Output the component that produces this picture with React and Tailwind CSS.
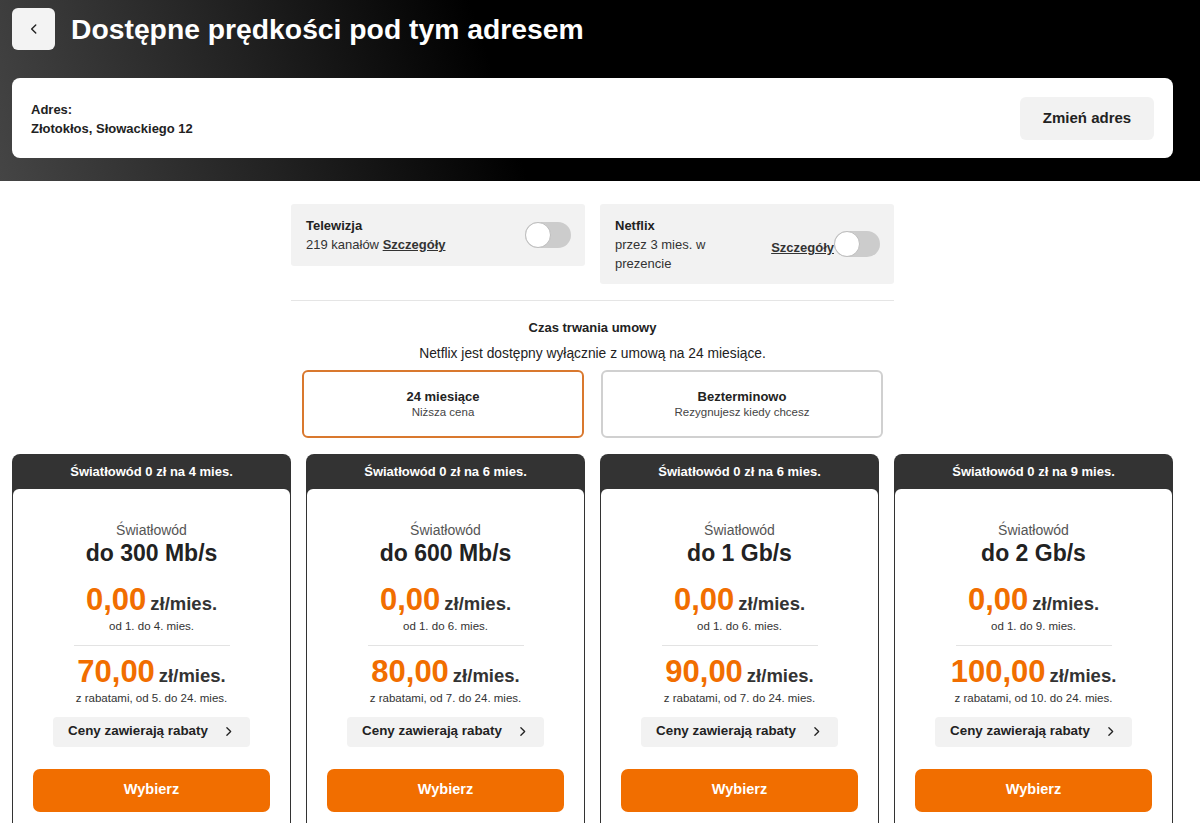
import React from "react";

const plans = [
  { promo: "Światłowód 0 zł na 4 mies.", speed: "do 300 Mb/s", first: "od 1. do 4. mies.", price: "70,00", rest: "z rabatami, od 5. do 24. mies." },
  { promo: "Światłowód 0 zł na 6 mies.", speed: "do 600 Mb/s", first: "od 1. do 6. mies.", price: "80,00", rest: "z rabatami, od 7. do 24. mies." },
  { promo: "Światłowód 0 zł na 6 mies.", speed: "do 1 Gb/s", first: "od 1. do 6. mies.", price: "90,00", rest: "z rabatami, od 7. do 24. mies." },
  { promo: "Światłowód 0 zł na 9 mies.", speed: "do 2 Gb/s", first: "od 1. do 9. mies.", price: "100,00", rest: "z rabatami, od 10. do 24. mies." },
];

const Toggle = () => (
  <div className="w-[46px] h-[26px] rounded-full bg-[#cccccc] flex items-center shrink-0">
    <div className="w-[26px] h-[26px] rounded-full bg-white border border-[#bdbdbd]" />
  </div>
);

const Chevron = ({ className = "" }) => (
  <svg viewBox="0 0 24 24" className={className} fill="none" stroke="currentColor" strokeWidth="2.4" strokeLinecap="round" strokeLinejoin="round">
    <path d="M9 5l7 7-7 7" />
  </svg>
);

const PlanCard = ({ plan }) => (
  <div className="bg-[#333333] rounded-t-lg px-px h-[369px] flex flex-col">
    <div className="h-[35px] flex items-center justify-center text-white text-[13px] font-bold">
      {plan.promo}
    </div>
    <div className="bg-white rounded-t-md flex-1 flex flex-col items-center pt-[32px]">
      <div className="text-[14px] text-[#555555] leading-[18px]">Światłowód</div>
      <div className="text-[23px] font-bold text-[#222222] leading-[28px]">{plan.speed}</div>
      <div className="mt-[16px] flex items-baseline gap-[4px]">
        <span className="text-[31px] font-bold text-[#f16e00] leading-[34px]">0,00</span>
        <span className="text-[18.5px] font-bold text-[#333333]">zł/mies.</span>
      </div>
      <div className="text-[11.5px] text-[#333333] leading-[14px] mt-[1px]">{plan.first}</div>
      <div className="mt-[12px] w-[156px] h-px bg-[#e3e3e3]" />
      <div className="mt-[9px] flex items-baseline gap-[4px]">
        <span className="text-[31px] font-bold text-[#f16e00] leading-[34px]">{plan.price}</span>
        <span className="text-[18.5px] font-bold text-[#333333]">zł/mies.</span>
      </div>
      <div className="text-[11.5px] text-[#333333] leading-[14px] mt-[1px]">{plan.rest}</div>
      <div className="mt-[12px] h-[30px] w-[197px] bg-[#f2f2f2] rounded-[4px] flex items-center justify-center gap-[14px] text-[13.4px] font-bold text-[#222222]">
        <span>Ceny zawierają rabaty</span>
        <Chevron className="w-[13px] h-[13px]" />
      </div>
      <div className="mt-[22px] h-[43px] w-[237px] bg-[#f16e00] rounded-[7px] flex items-center justify-center text-white text-[14.5px] font-bold">
        Wybierz
      </div>
    </div>
  </div>
);

export default function App() {
  return (
    <div className="w-[1200px] h-[824px] overflow-hidden bg-white font-['Liberation_Sans',Arial,sans-serif] text-[#222222]">
      {/* Header */}
      <header className="h-[181px] bg-[linear-gradient(72deg,#454545_0%,#222222_22%,#000000_42%,#000000_100%)] px-[12px] pt-[8px]">
        <div className="flex items-center gap-[16px] h-[42px]">
          <button className="w-[43px] h-[42px] rounded-[6px] bg-[#f3f3f3] flex items-center justify-center text-[#222222]">
            <Chevron className="w-[14px] h-[14px] rotate-180" />
          </button>
          <h1 className="text-[28.3px] font-bold text-white">Dostępne prędkości pod tym adresem</h1>
        </div>
        <div className="mt-[28px] w-[1161px] h-[80px] bg-white rounded-[8px] flex items-center justify-between pl-[19px] pr-[19px]">
          <div className="text-[13px] font-bold text-[#222222] leading-[19px] pt-[1px]">
            <div>Adres:</div>
            <div>Złotokłos, Słowackiego 12</div>
          </div>
          <button className="w-[134px] h-[43px] bg-[#f2f2f2] rounded-[6px] text-[15px] font-bold text-[#222222]">
            Zmień adres
          </button>
        </div>
      </header>

      {/* Options */}
      <main className="w-[1161px] ml-[12px]">
        <div className="w-[603px] mx-auto pt-[23px]">
          <div className="flex gap-[15px] items-start">
            <div className="w-[294px] h-[62px] bg-[#f2f2f2] rounded-[3px] pl-[15px] pr-[14px] flex items-center justify-between">
              <div className="text-[13px] leading-[19px]">
                <div className="font-bold">Telewizja</div>
                <div className="text-[#333333]">
                  219 kanałów <span className="font-bold underline">Szczegóły</span>
                </div>
              </div>
              <Toggle />
            </div>
            <div className="w-[294px] h-[80px] bg-[#f2f2f2] rounded-[3px] pl-[15px] pr-[14px] pt-[12px] flex items-start">
              <div className="text-[13px] leading-[19px] w-[115px]">
                <div className="font-bold">Netflix</div>
                <div className="text-[#333333]">przez 3 mies. w prezencie</div>
              </div>
              <div className="flex-1 flex items-end justify-end mt-[15px]">
                <span className="text-[13px] font-bold underline text-[#333333] leading-[19px]">Szczegóły</span>
                <Toggle />
              </div>
            </div>
          </div>

          <div className="mt-[16px] h-px bg-[#e5e5e5]" />

          <div className="text-center mt-[19px] text-[13px] font-bold leading-[16px]">Czas trwania umowy</div>
          <div className="text-center mt-[10px] text-[13.8px] text-[#222222] leading-[16px]">
            Netflix jest dostępny wyłącznie z umową na 24 miesiące.
          </div>

          <div className="mt-[8px] flex justify-center gap-[17px]">
            <div className="w-[282px] h-[68px] rounded-[6px] border-2 border-[#d9782e] flex flex-col items-center justify-center">
              <div className="text-[13px] font-bold leading-[17px]">24 miesiące</div>
              <div className="text-[11.5px] text-[#444444] leading-[15px]">Niższa cena</div>
            </div>
            <div className="w-[282px] h-[68px] rounded-[6px] border-2 border-[#d0d0d0] flex flex-col items-center justify-center">
              <div className="text-[13px] font-bold leading-[17px]">Bezterminowo</div>
              <div className="text-[11.5px] text-[#444444] leading-[15px]">Rezygnujesz kiedy chcesz</div>
            </div>
          </div>
        </div>

        {/* Plans */}
        <div className="mt-[16px] grid grid-cols-4 gap-[15px]">
          {plans.map((p, i) => (
            <PlanCard key={i} plan={p} />
          ))}
        </div>
      </main>
    </div>
  );
}
